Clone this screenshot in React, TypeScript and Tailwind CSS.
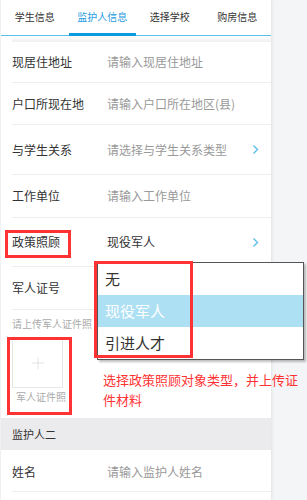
import { Plus } from 'lucide-react';

const FONT = "font-['Noto_Sans_CJK_SC','Noto_Sans',sans-serif]";

const TABS = ['学生信息', '监护人信息', '选择学校', '购房信息'];
const ACTIVE_TAB = 1;

interface FieldRow {
  label: string;
  value: string;
  placeholder?: boolean;
  arrow?: boolean;
  height: string;
}

const ROWS: FieldRow[] = [
  { label: '现居住地址', value: '请输入现居住地址', placeholder: true, height: 'h-[41px]' },
  { label: '户口所现在地', value: '请输入户口所在地区(县)', placeholder: true, height: 'h-[42px]' },
  { label: '与学生关系', value: '请选择与学生关系类型', placeholder: true, arrow: true, height: 'h-[50px]' },
  { label: '工作单位', value: '请输入工作单位', placeholder: true, height: 'h-[43px]' },
  { label: '政策照顾', value: '现役军人', arrow: true, height: 'h-[49px]' },
  { label: '军人证号', value: '', height: 'h-[43px]' },
];

const OPTIONS = ['无', '现役军人', '引进人才'];
const SELECTED = 1;

export default function App() {
  return (
    <div className={`relative flex h-[500px] w-[307px] overflow-hidden bg-[#f4f5f6] ${FONT}`}>
      <div className="w-[271px] shrink-0 border-l border-[#f0f0f0] bg-white shadow-[1px_0_3px_rgba(0,0,0,0.08)]">
        {/* 顶部 tab */}
        <div className="flex h-[36px] border-b border-[#5bc0eb]">
          {TABS.map((t, i) => (
            <div
              key={t}
              className={`relative flex flex-1 items-center justify-center pb-[2px] text-[10px] ${
                i === ACTIVE_TAB ? 'text-[#1d9be0]' : 'text-[#333]'
              }`}
            >
              {t}
              {i === ACTIVE_TAB && (
                <span className="absolute bottom-[-1px] left-0 right-0 h-[3px] bg-[#0a9be0]" />
              )}
            </div>
          ))}
        </div>
        <div className="ml-[11px] h-[6px] bg-gradient-to-b from-white to-[#f0f0f0]" />

        {ROWS.map((r) => (
          <div key={r.label} className="pl-[11px]">
            <div className={`flex items-center border-b border-[#eee] text-[12px] ${r.height}`}>
              <span className="w-[95px] shrink-0 text-[#333]">{r.label}</span>
              <span className={r.placeholder ? 'text-[#999]' : 'text-[#333]'}>{r.value}</span>
              {r.arrow && (
                <svg className="ml-auto mr-[12px]" width="7" height="11" viewBox="0 0 7 11">
                  <polyline
                    points="1.5,1.5 5.5,5.5 1.5,9.5"
                    fill="none"
                    stroke="#5bbfe9"
                    strokeWidth="1.4"
                  />
                </svg>
              )}
            </div>
          </div>
        ))}

        {/* 上传证件照 */}
        <div className="h-[108px] pl-[11px] pt-[8px]">
          <p className="text-[10px] leading-[12px] text-[#aaa]">请上传军人证件照</p>
          <div className="mt-[8px] flex h-[50px] w-[51px] items-center justify-center border border-[#e6e6e6]">
            <Plus className="size-[20px] text-[#ddd]" strokeWidth={1} />
          </div>
          <p className="mt-[3px] pl-[4px] text-[10px] leading-[12px] text-[#aaa]">军人证件照</p>
        </div>

        <div className="flex h-[32px] items-center bg-[#ebebed] pl-[11px] text-[11px] text-[#333]">
          监护人二
        </div>
        <div className="pl-[11px]">
          <div className="flex h-[42px] items-center border-b border-[#eee] pt-[3px] text-[12px]">
            <span className="w-[95px] shrink-0 text-[#333]">姓名</span>
            <span className="text-[#999]">请输入监护人姓名</span>
          </div>
        </div>
      </div>

      {/* 下拉选项 */}
      <div className="absolute left-[97px] top-[262px] w-[207px] border border-[#555] bg-white shadow-[2px_2px_2px_rgba(0,0,0,0.25)]">
        {OPTIONS.map((o, i) => (
          <div
            key={o}
            className={`flex h-[32px] items-center pl-[7px] text-[15px] ${
              i === SELECTED ? 'bg-[#aee0f4] text-white' : 'text-[#333]'
            }`}
          >
            {o}
          </div>
        ))}
      </div>

      {/* 标注 */}
      <div className="absolute left-[5px] top-[230px] h-[28px] w-[66px] border-[3px] border-[#f33]" />
      <div className="absolute left-[94px] top-[261px] h-[97px] w-[99px] border-[3px] border-[#f33]" />
      <div className="absolute left-[7px] top-[337px] h-[78px] w-[65px] border-[3px] border-[#f33]" />
      <p className="absolute left-[103px] top-[370px] w-[197px] text-[13px] leading-[20px] text-[#f33]">
        选择政策照顾对象类型，并上传证件材料
      </p>
    </div>
  );
}
